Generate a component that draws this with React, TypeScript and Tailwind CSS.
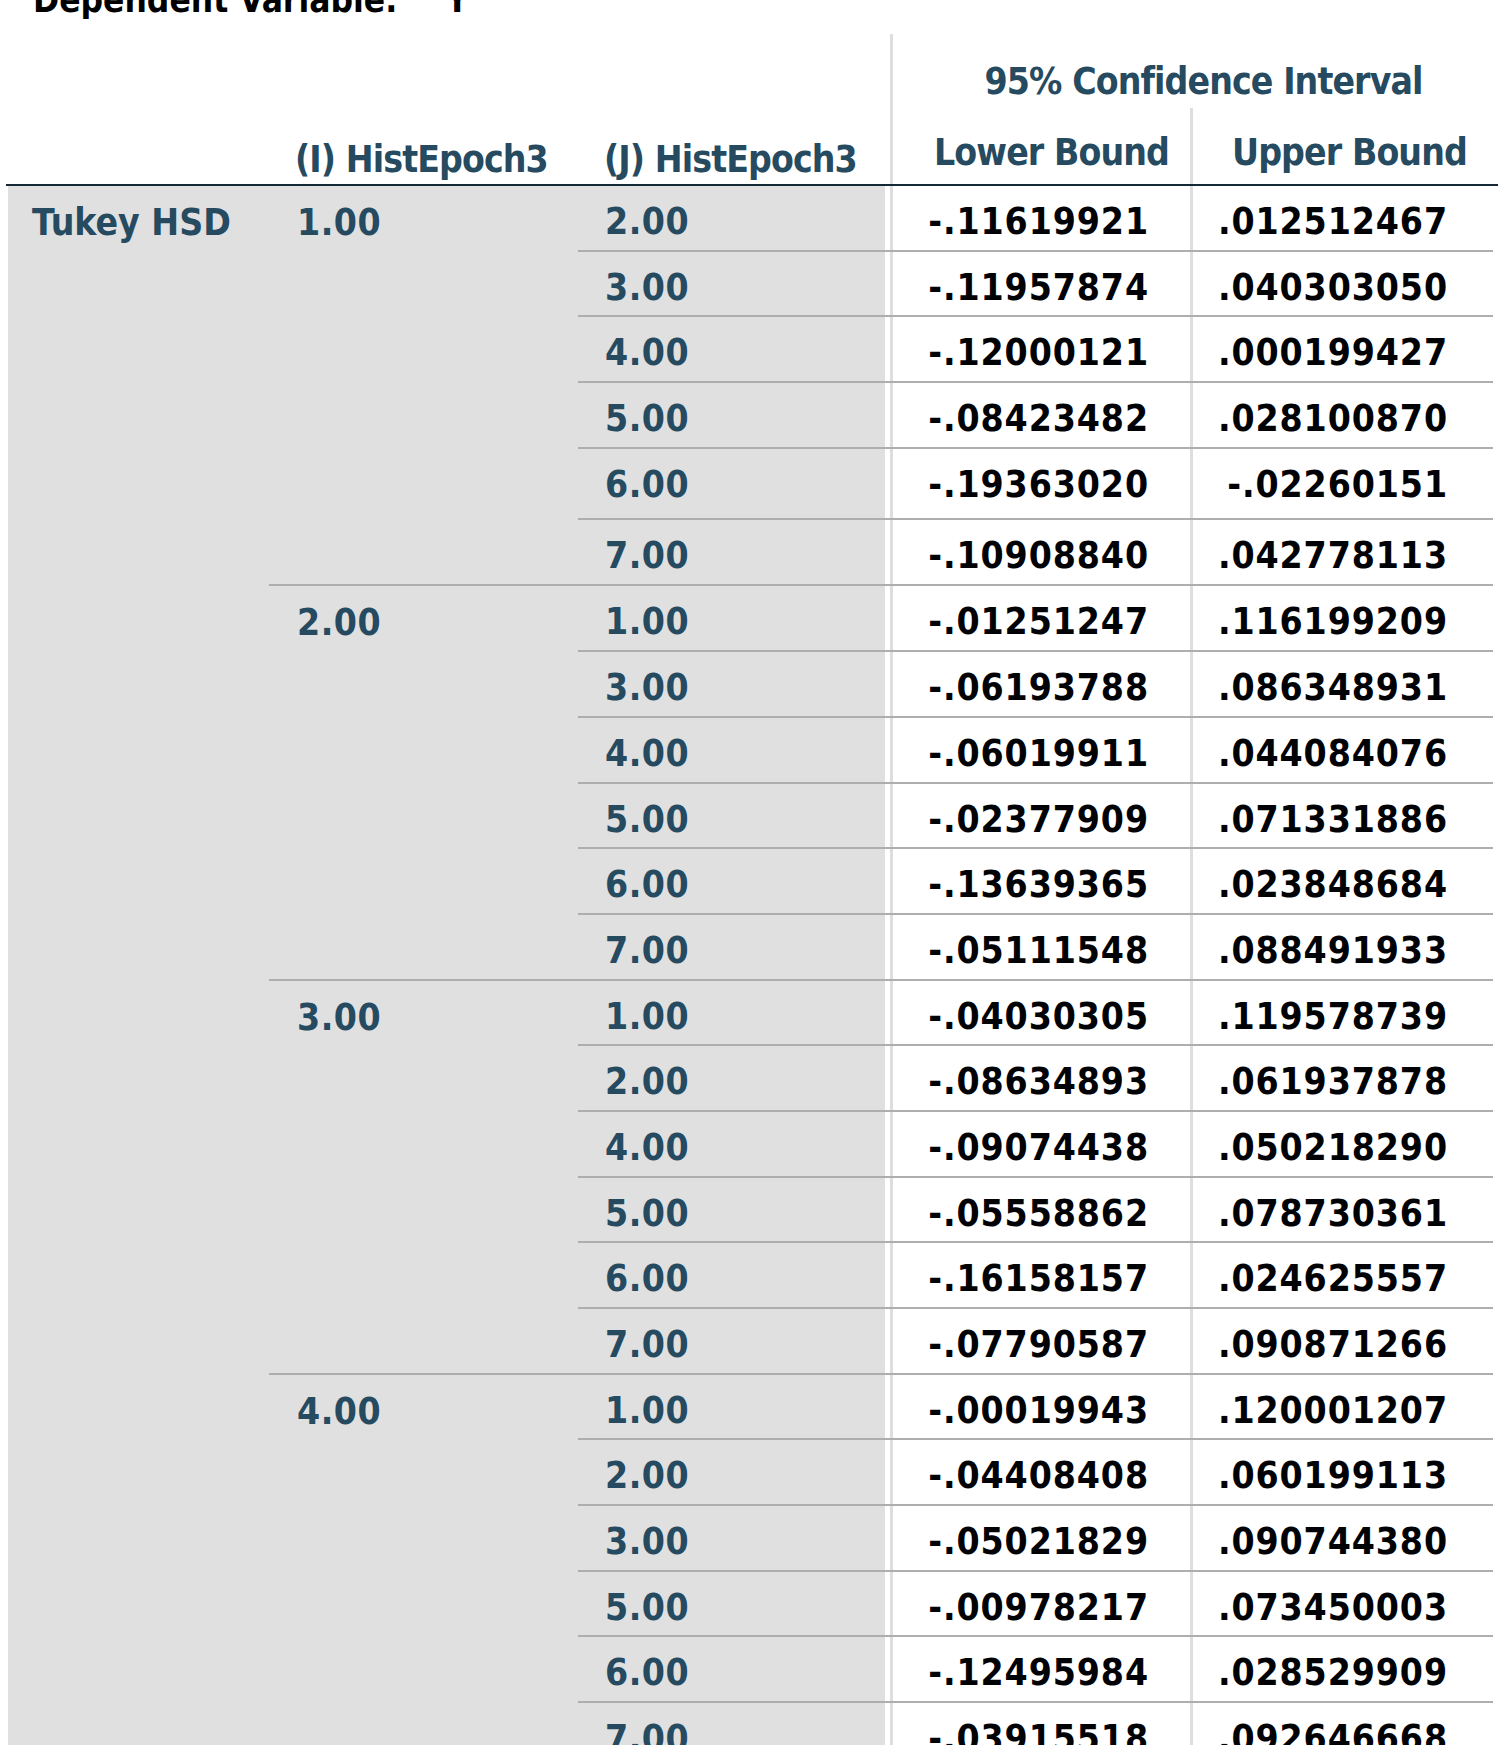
const groups = [
  {
    i: '1.00',
    rows: [
      ['2.00', '-.11619921', '.012512467'],
      ['3.00', '-.11957874', '.040303050'],
      ['4.00', '-.12000121', '.000199427'],
      ['5.00', '-.08423482', '.028100870'],
      ['6.00', '-.19363020', '-.02260151'],
      ['7.00', '-.10908840', '.042778113'],
    ],
  },
  {
    i: '2.00',
    rows: [
      ['1.00', '-.01251247', '.116199209'],
      ['3.00', '-.06193788', '.086348931'],
      ['4.00', '-.06019911', '.044084076'],
      ['5.00', '-.02377909', '.071331886'],
      ['6.00', '-.13639365', '.023848684'],
      ['7.00', '-.05111548', '.088491933'],
    ],
  },
  {
    i: '3.00',
    rows: [
      ['1.00', '-.04030305', '.119578739'],
      ['2.00', '-.08634893', '.061937878'],
      ['4.00', '-.09074438', '.050218290'],
      ['5.00', '-.05558862', '.078730361'],
      ['6.00', '-.16158157', '.024625557'],
      ['7.00', '-.07790587', '.090871266'],
    ],
  },
  {
    i: '4.00',
    rows: [
      ['1.00', '-.00019943', '.120001207'],
      ['2.00', '-.04408408', '.060199113'],
      ['3.00', '-.05021829', '.090744380'],
      ['5.00', '-.00978217', '.073450003'],
      ['6.00', '-.12495984', '.028529909'],
      ['7.00', '-.03915518', '.092646668'],
    ],
  },
];

function rowHeight(g: number, r: number, last: boolean) {
  if (g === 0 && r === 4) return 'h-[71.7px] border-b-2';
  if (g === 0 && last) return 'h-[64px]';
  if (last) return 'h-[63.7px]';
  return 'h-[65.7px] border-b-2';
}

export default function App() {
  return (
    <div className="h-[1745px] overflow-hidden bg-white pl-[6px] font-['DejaVu_Sans_Condensed','DejaVu_Sans',sans-serif] text-[37px] font-bold leading-[37px] [font-stretch:condensed]">
      <div className="-mt-[18px] flex h-[52px] text-[35px] text-black">
        <span className="pl-[27px]">Dependent Variable:</span>
        <span className="pl-[48px]">Y</span>
      </div>

      {/* header */}
      <div className="flex h-[150px] tracking-[-0.9px] text-[#264a60]">
        <div className="w-[263px]" />
        <div className="flex w-[309px] items-end pb-[6px] pl-[26px]">(I) HistEpoch3</div>
        <div className="flex w-[307px] items-end pb-[6px] pl-[26px]">(J) HistEpoch3</div>
        <div className="w-[5px]" />
        <div className="flex w-[608px] flex-col border-l-[3px] border-[#dedede]">
          <div className="h-[74px] pl-[16px] pt-[29px] text-center">95% Confidence Interval</div>
          <div className="flex h-[76px]">
            <div className="flex w-[297px] items-end justify-center pb-[13px] pl-[20px]">Lower Bound</div>
            <div className="flex flex-1 items-end justify-center border-l-[3px] border-[#dedede] pb-[13px] pl-[8px]">
              Upper Bound
            </div>
          </div>
        </div>
      </div>
      <div className="h-[2px] w-[1492px] bg-[#152935]" />

      {/* body */}
      <div className="flex">
        <div className="ml-[2px] w-[261px] bg-[#e0e0e0] pl-[24px] pt-[18px] text-[#264a60]">Tukey HSD</div>
        <div className="flex w-[1224px] flex-col">
          {groups.map((grp, g) => (
            <div key={grp.i} className="flex border-b-2 border-[#aeaeae]">
              <div className="w-[309px] bg-[#e0e0e0] pl-[28px] pt-[18px] tracking-[0.5px] text-[#264a60]">{grp.i}</div>
              <div className="flex flex-1 flex-col">
                {grp.rows.map((row, r) => (
                  <div
                    key={row[0]}
                    className={`flex border-[#aeaeae] ${rowHeight(g, r, r === grp.rows.length - 1)}`}
                  >
                    <div className="w-[307px] bg-[#e0e0e0] pl-[27px] pt-[17px] tracking-[0.5px] text-[#264a60]">
                      {row[0]}
                    </div>
                    <div className="w-[5px]" />
                    <div className="w-[300px] border-l-[3px] border-[#dedede] pr-[41px] pt-[17px] text-right tracking-[0.9px] text-[#010205]">
                      {row[1]}
                    </div>
                    <div className="flex-1 border-l-[3px] border-[#dedede] pr-[45px] pt-[17px] text-right tracking-[0.9px] text-[#010205]">
                      {row[2]}
                    </div>
                  </div>
                ))}
              </div>
            </div>
          ))}
        </div>
      </div>
    </div>
  );
}
